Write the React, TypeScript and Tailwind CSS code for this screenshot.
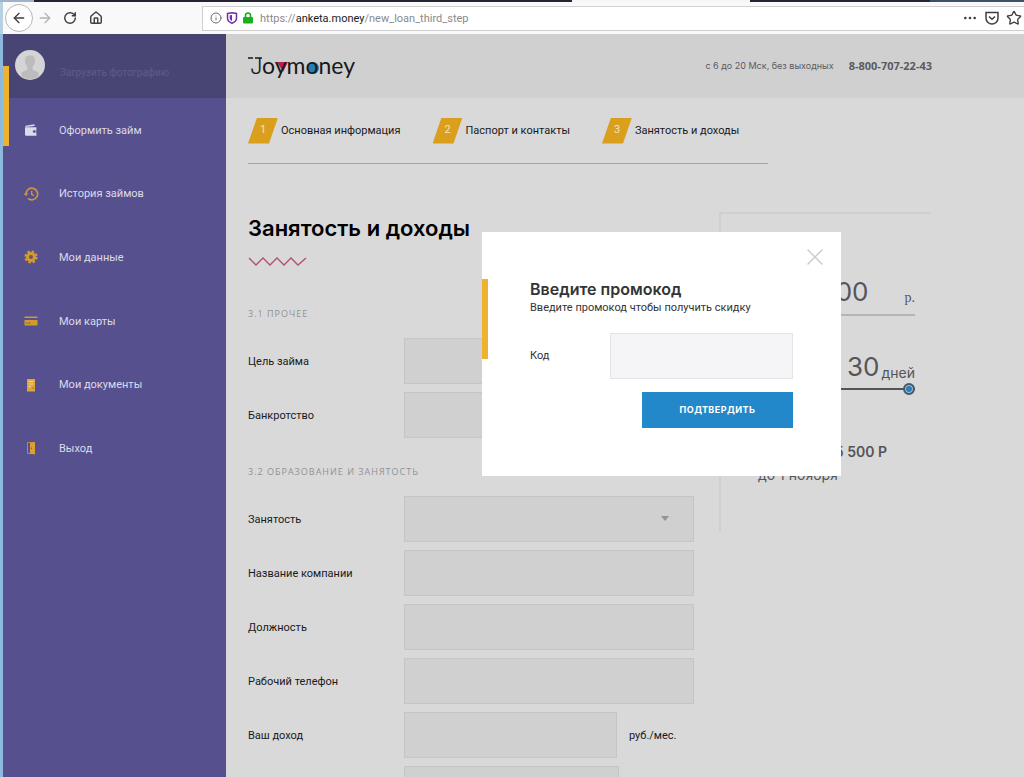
import React from 'react';
import { ArrowLeft, ArrowRight, RotateCw, House, Info, Star, Ellipsis, X } from 'lucide-react';

const icons = {
  wallet: (
    <svg className="h-4 w-4" viewBox="0 0 16 16" fill="#dcdce8">
      <path d="M2.500 3.800 11.500 2.300v1.600L2.500 5z" />
      <path d="M2 5.300h11.400v3h-2.400a1.200 1.200 0 0 0 0 2.400h2.400v3H3.200A1.200 1.200 0 0 1 2 12.500z" />
      <path d="M12 8.300h1.400v2.400H12z" opacity=".5" />
    </svg>
  ),
  history: (
    <svg className="h-4 w-4" viewBox="0 0 16 16" fill="none" stroke="#c9973f" strokeWidth="1.700">
      <path d="M3 8a5.800 5.800 0 1 1 2 4.400" />
      <path d="M.4 7.400h5L3 10z" fill="#c9973f" stroke="none" />
      <path d="M8.700 4.800v3.500l2.200 1.400" strokeWidth="1.400" />
    </svg>
  ),
  gear: (
    <svg className="h-4 w-4" viewBox="0 0 16 16">
      <circle cx="8" cy="8" r="5" fill="#d39a2c" />
      <circle cx="8" cy="8" r="5.400" fill="none" stroke="#d39a2c" strokeWidth="2.400" strokeDasharray="2.400 1.840" />
      <circle cx="8" cy="8" r="2" fill="#6a5467" />
    </svg>
  ),
  card: (
    <svg className="h-4 w-4" viewBox="0 0 16 16" fill="#cf9a30">
      <path d="M1.500 3.500h13v1.600h-13zM1.500 7h13v5.500h-13z" />
      <path d="M3 9.500h1.300v1.300H3zM5.500 9.500h2v1.300h-2z" fill="#7b6458" />
    </svg>
  ),
  document: (
    <svg className="h-4 w-4" viewBox="0 0 16 16">
      <path d="M4 2h8v12.500H4z" fill="#dda63a" />
      <path d="M5.500 4.500h5M5.500 7h5M5.500 9.500h2.500" stroke="#f1d79c" strokeWidth="1.200" />
      <path d="M9.500 10.500h1.500V12H9.500z" fill="#a87a36" />
    </svg>
  ),
  door: (
    <svg className="h-4 w-4" viewBox="0 0 16 16">
      <path d="M4.500 2.500h7v11h-7z" fill="none" stroke="#c2893a" />
      <path d="M7 3l5-1v12.500l-5-1z" fill="#dda035" />
      <circle cx="8.500" cy="8.300" r=".7" fill="#6a5467" />
    </svg>
  ),
};

const menu = [
  { title: 'Оформить займ', icon: icons.wallet },
  { title: 'История займов', icon: icons.history },
  { title: 'Мои данные', icon: icons.gear },
  { title: 'Мои карты', icon: icons.card },
  { title: 'Мои документы', icon: icons.document },
  { title: 'Выход', icon: icons.door },
];

const steps = ['Основная информация', 'Паспорт и контакты', 'Занятость и доходы'];

const BrowserBar: React.FC = () => (
  <header className="shrink-0 bg-[#f9f9fa]">
    <div className="flex h-[2px]">
      <div className="w-[34px] bg-[#9db4c8]" />
      <div className="flex-1 bg-[#262433]" />
      <div className="w-[178px] bg-[#f5f5f7]" />
      <div className="w-[180px] bg-[#262433]" />
      <div className="w-[94px] bg-[#3d5266]" />
    </div>
    <div className="flex h-8 items-center border-l-[3px] border-[#b8d0e4] text-[#3f3f43]">
      <button aria-label="Назад" className="ml-[2px] flex h-7 w-7 items-center justify-center rounded-full border border-[#b8b8ba] bg-white">
        <ArrowLeft className="h-4 w-4" />
      </button>
      <button aria-label="Вперёд" className="p-1 text-[#b4b4b6]">
        <ArrowRight className="h-4 w-4" />
      </button>
      <button aria-label="Обновить" className="ml-[2px] p-1">
        <RotateCw className="h-[14px] w-[14px]" strokeWidth={2.5} />
      </button>
      <button aria-label="Домой" className="ml-1 p-1">
        <House className="h-[14px] w-[14px]" strokeWidth={2.5} />
      </button>
      <div className="ml-[95px] flex h-[25px] flex-1 items-center gap-1 border border-r-0 border-[#cfcfd1] bg-white pl-[7px] pr-[2px]">
        <Info className="h-3 w-3 text-[#6a6a6e]" />
        <svg className="h-3 w-3" viewBox="0 0 12 12">
          <path d="M1.500 1.500 6 .8l4.500.7V6c0 2.500-2 4.300-4.500 5.200C3.500 10.300 1.500 8.500 1.500 6z" fill="#fff" stroke="#6f2da8" strokeWidth="1.500" />
          <path d="M6 3v6C4.500 8.300 3.700 7.300 3.700 6V3.300z" fill="#6f2da8" />
        </svg>
        <svg className="h-3 w-3" viewBox="0 0 12 12">
          <path d="M3.500 6V3.500a2.500 2.500 0 0 1 5 0V6" fill="none" stroke="#1bb01b" strokeWidth="1.600" />
          <rect x="1" y="5" width="10" height="6.500" rx="1" fill="#1bb01b" />
        </svg>
        <div className="relative ml-[2px] flex-1 pt-[2px] leading-4">
          <input aria-label="Адрес" className="absolute inset-0 w-full bg-transparent text-transparent outline-none" />
          <p className="text-[#8a8a8e]">
            https://<span className="text-[#1c1c20]">anketa.money</span>/new_loan_third_step
          </p>
        </div>
        <Ellipsis className="h-4 w-4" />
        <svg className="ml-[2px] h-4 w-4" viewBox="0 0 16 16" fill="none" stroke="currentColor" strokeWidth="1.500">
          <path d="M2 2.500h12V8a6 6 0 0 1-12 0zM5 6.500l3 2.800 3-2.800" />
        </svg>
        <Star className="ml-[2px] h-4 w-4" />
      </div>
    </div>
  </header>
);

const Sidebar: React.FC = () => (
  <aside className="w-[226px] shrink-0 border-l-[3px] border-[#8db9dc] bg-[#56518e] text-[#dcdaea]">
    <div className="flex h-16 items-start bg-[#484575] pl-3 pt-4">
      <svg className="h-[30px] w-[30px] shrink-0" viewBox="0 0 30 30">
        <circle cx="15" cy="15" r="15" fill="#d4d4d7" />
        <path d="M10 10.500C10 7 12 5.500 15 5.500s5 1.500 5 5c0 3-1 5-2.500 6.500v2.500l6 3v4a15 15 0 0 1-17 0v-4l6-3V17C11 15.500 10 13.500 10 10.500z" fill="#bcbcbd" />
      </svg>
      <a href="#photo" className="ml-[15px] pt-[15px] text-[10px] leading-4 text-[#5f5c85]">Загрузить фотографию</a>
    </div>
    <nav className="relative flex h-[382px] flex-col">
      <div className="absolute -top-8 left-0 h-20 w-[6px] bg-[#efb230]" />
      {menu.map((item) => (
        <a key={item.title} href="#menu" className="flex flex-1 items-center gap-5 pl-5">
          {item.icon}
          <span className="pt-[2px]">{item.title}</span>
        </a>
      ))}
    </nav>
  </aside>
);

const Logo: React.FC = () => (
  <svg className="h-9 w-28 overflow-visible" viewBox="0 0 112 36" role="img" aria-label="Joymoney">
    <path d="M29 14h11l-5 10z" fill="#b81f4c" />
    <circle cx="65" cy="20" r="6" fill="#2480b0" />
    <path d="M0 10h5M7 10h7" stroke="#19191b" strokeWidth="1.500" />
    <text x="2" y="26" fontSize="22" fontFamily="Inter, sans-serif" fontWeight="300" fill="#19191b">J</text>
    <text x="14" y="26" fontSize="23" fontFamily="Lato, sans-serif" fill="#19191b">oymoney</text>
  </svg>
);

const fieldClass = 'h-[46px] appearance-none border border-[#c5c5c7] bg-[#d0d0d1] outline-none';
const sectionClass = "font-['Open_Sans',sans-serif] text-[9px] leading-3 tracking-[1px] text-[#929294]";

const Field: React.FC<{ id: string; label: string; children: React.ReactNode }> = ({ id, label, children }) => (
  <div className="mb-2 flex items-center">
    <label htmlFor={id} className="w-[156px] shrink-0 pt-[2px]">{label}</label>
    {children}
  </div>
);

const LoanForm: React.FC = () => (
  <form className="w-[446px] shrink-0">
    <h1 className="font-['Inter',sans-serif] text-[22px] font-semibold leading-8 text-black">Занятость и доходы</h1>
    <svg className="mt-3 h-3 w-[60px]" viewBox="0 0 60 12" fill="none" stroke="#b0506e" strokeWidth="1.300">
      <path d="M1 2l7 7 7-7 7 7 7-7 7 7 7-7 7 7 8-7" />
    </svg>
    <h2 className={`${sectionClass} mt-10`}>3.1 ПРОЧЕЕ</h2>
    <div className="mt-[18px]">
      <Field id="goal" label="Цель займа">
        <input id="goal" className={`${fieldClass} w-[290px]`} />
      </Field>
      <Field id="bankruptcy" label="Банкротство">
        <input id="bankruptcy" className={`${fieldClass} w-[290px]`} />
      </Field>
    </div>
    <h2 className={`${sectionClass} mt-7`}>3.2 ОБРАЗОВАНИЕ И ЗАНЯТОСТЬ</h2>
    <div className="mt-[18px]">
      <Field id="employment" label="Занятость">
        <div className="relative flex">
          <select id="employment" className={`${fieldClass} w-[290px]`} />
          <svg className="pointer-events-none absolute right-6 top-5 h-[6px] w-[10px]" viewBox="0 0 10 6">
            <path d="M1 0h8L5 5z" fill="#949496" />
          </svg>
        </div>
      </Field>
      <Field id="company" label="Название компании">
        <input id="company" className={`${fieldClass} w-[290px]`} />
      </Field>
      <Field id="position" label="Должность">
        <input id="position" className={`${fieldClass} w-[290px]`} />
      </Field>
      <Field id="phone" label="Рабочий телефон">
        <input id="phone" className={`${fieldClass} w-[290px]`} />
      </Field>
      <Field id="income" label="Ваш доход">
        <input id="income" className={`${fieldClass} w-[213px]`} />
        <span className="ml-3 pt-[2px]">руб./мес.</span>
      </Field>
      <div className="flex pl-[156px]">
        <input aria-label="Дата" className={`${fieldClass} w-[215px]`} />
      </div>
    </div>
  </form>
);

const Calculator: React.FC = () => (
  <section className="ml-[25px] h-80 w-[212px] shrink-0 border-l-2 border-t-2 border-[#cfcfd1] pl-[37px] pr-4 font-['Inter',sans-serif] text-[#555557]">
    <div className="mt-[62px] flex items-end justify-end border-b-2 border-[#b5b5b7] pb-[6px]">
      <span className="text-[26px] leading-8">00</span>
      <span className="ml-9 font-['Liberation_Serif',serif] text-sm">р.</span>
    </div>
    <div className="mt-[35px] flex items-end justify-end gap-[2px]">
      <span className="text-[26px] leading-8">30</span>
      <span className="text-[14px] leading-5">дней</span>
    </div>
    <div className="relative h-3">
      <div className="absolute top-[5px] h-[2px] w-full bg-[#555557]" />
      <input type="range" aria-label="Срок займа" className="absolute inset-0 w-full opacity-0" />
      <div className="absolute right-0 top-0 h-3 w-3 rounded-full border-2 border-[#4b5864] bg-[#2d7db8] ring-inset ring-1 ring-[#9fc0d8]" />
    </div>
    <p className="mt-[46px] pr-7 text-right text-[14px] font-semibold">5 500 Р</p>
    <p className="mt-[2px] text-[14px]">до 1 ноября</p>
  </section>
);

const PromoDialog: React.FC = () => (
  <div role="dialog" aria-labelledby="promo-title" className="absolute left-[482px] top-[232px] flex h-[244px] w-[359px] items-start bg-white text-[#333335]">
    <div className="mt-[47px] h-20 w-[6px] bg-[#efb230]" />
    <button aria-label="Закрыть" className="absolute right-3 top-[11px] text-[#c9c9cb]">
      <X className="h-7 w-7" strokeWidth={1.2} />
    </button>
    <form className="ml-[42px] mt-[47px] flex w-[263px] flex-col">
      <h2 id="promo-title" className="font-['Inter',sans-serif] text-base font-semibold leading-5">Введите промокод</h2>
      <p className="leading-[18px]">Введите промокод чтобы получить скидку</p>
      <div className="mt-4 flex items-center justify-between">
        <label htmlFor="code">Код</label>
        <input id="code" className="h-[46px] w-[183px] border border-[#e3e3e5] bg-[#f5f5f7] outline-none" />
      </div>
      <button type="button" className="mt-[13px] h-9 w-[151px] self-end bg-[#2388c9] font-['Inter',sans-serif] text-[9px] font-bold tracking-wider text-white">
        ПОДТВЕРДИТЬ
      </button>
    </form>
  </div>
);

export default function App() {
  return (
    <div className="relative flex h-screen flex-col overflow-hidden bg-[#d9d9da] font-['Roboto','Liberation_Sans',sans-serif] text-[11px] text-[#19191b]">
      <BrowserBar />
      <div className="flex min-h-0 flex-1">
        <Sidebar />
        <main className="min-w-0 flex-1">
          <div className="flex h-16 items-center bg-[#d0d0d1] pl-[22px] pr-[92px] text-[#5b5b5e]">
            <Logo />
            <span className="ml-auto font-['Inter',sans-serif] text-[9px]">с 6 до 20 Мск, без выходных</span>
            <a href="tel:88007072243" className="ml-[15px] font-['Open_Sans',sans-serif] font-bold">8-800-707-22-43</a>
          </div>
          <div className="pl-[22px]">
            <ol className="flex h-[66px] w-[520px] items-center gap-8 border-b border-b-[#dba520]">
              {steps.map((step, i) => (
                <li key={step} className="flex items-center gap-[3px]">
                  <span className="flex h-[26px] w-[30px] items-center justify-center bg-[#daa01d] text-[#f1e3c0] [clip-path:polygon(30%_0,100%_0,70%_100%,0_100%)]">
                    {i + 1}
                  </span>
                  <span className="pt-[2px]">{step}</span>
                </li>
              ))}
            </ol>
            <div className="mt-12 flex items-start">
              <LoanForm />
              <Calculator />
            </div>
          </div>
        </main>
      </div>
      <PromoDialog />
    </div>
  );
}
